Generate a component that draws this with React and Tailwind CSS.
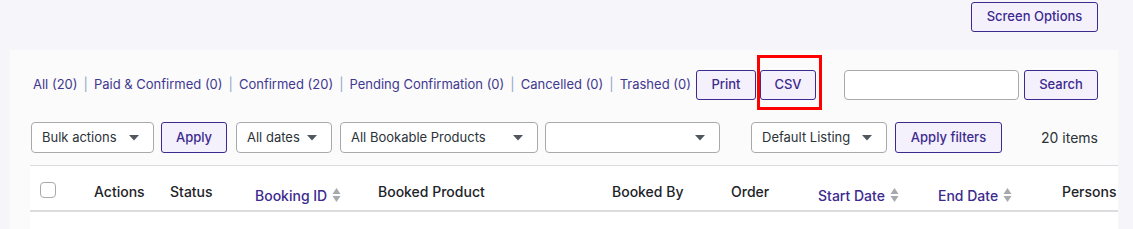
import React from "react";

const font = { fontFamily: "Inter, 'Noto Sans', sans-serif" };

function Caret() {
  return (
    <svg width="10" height="6" viewBox="0 0 10 6" className="shrink-0">
      <path d="M0 0 L10 0 L5 5.5 Z" fill="#50575e" />
    </svg>
  );
}

function Select({ label, w }) {
  return (
    <div
      className={`flex h-[31px] items-center justify-between whitespace-nowrap rounded-[4px] border border-[#a7aaad] bg-white pl-[10px] pr-[14px] text-[13px] text-[#2c3338] ${w}`}
    >
      <span>{label}</span>
      <Caret />
    </div>
  );
}

function Btn({ children, w, h = "h-[30px]" }) {
  return (
    <div
      className={`flex ${h} ${w} items-center justify-center whitespace-nowrap rounded-[3px] border border-[#3c2a8e] bg-[#f4f1fd] text-[13px] font-medium text-[#3c2a8e]`}
    >
      {children}
    </div>
  );
}

function Sort() {
  return (
    <svg width="9" height="16" viewBox="0 0 9 16" className="ml-[5px] shrink-0">
      <path d="M0.5 7 L4.5 1 L8.5 7 Z" fill="#a7aaad" />
      <path d="M0.5 9 L4.5 15 L8.5 9 Z" fill="#a7aaad" />
    </svg>
  );
}

function Sep() {
  return <span className="mx-[6px] text-[#8fa6c8]">|</span>;
}

export default function App() {
  const links = [
    "All (20)",
    "Paid & Confirmed (0)",
    "Confirmed (20)",
    "Pending Confirmation (0)",
    "Cancelled (0)",
    "Trashed (0)",
  ];
  return (
    <div style={font} className="h-[229px] w-[1133px] overflow-hidden bg-[#f6f5fa]">
      <div className="flex h-[50px] items-start justify-end pr-[35px] pt-[2px]">
        <Btn w="w-[127px]">Screen Options</Btn>
      </div>
      <div className="ml-[10px] w-[1108px] bg-[#fbfbfb] pt-[20px]">
        <div className="flex items-center pl-[23px] pr-[20px]">
          <div className="flex w-[659px] shrink-0 items-center whitespace-nowrap text-[13px] text-[#413891]">
            {links.map((l, i) => (
              <React.Fragment key={l}>
                {i > 0 && <Sep />}
                <span>{l}</span>
              </React.Fragment>
            ))}
          </div>
          <div className="ml-[4px]">
            <Btn w="w-[60px]">Print</Btn>
          </div>
          <div className="relative ml-[4px]">
            <Btn w="w-[56px]">CSV</Btn>
            <div className="pointer-events-none absolute -left-[3px] -right-[6px] -top-[15px] -bottom-[10px] border-[3px] border-[#ff0000]" />
          </div>
          <div className="ml-[28px] h-[30px] w-[175px] rounded-[4px] border border-[#a7aaad] bg-white" />
          <div className="ml-[5px]">
            <Btn w="w-[74px]">Search</Btn>
          </div>
        </div>
        <div className="mt-[22px] flex items-center pl-[21px] pr-[20px]">
          <Select label="Bulk actions" w="w-[123px]" />
          <div className="ml-[7px]">
            <Btn w="w-[66px]" h="h-[31px]">Apply</Btn>
          </div>
          <div className="ml-[9px]">
            <Select label="All dates" w="w-[96px]" />
          </div>
          <div className="ml-[8px]">
            <Select label="All Bookable Products" w="w-[198px]" />
          </div>
          <div className="ml-[7px]">
            <Select label="" w="w-[175px]" />
          </div>
          <div className="ml-[31px]">
            <Select label="Default Listing" w="w-[136px]" />
          </div>
          <div className="ml-[8px]">
            <Btn w="w-[107px]" h="h-[31px]">Apply filters</Btn>
          </div>
          <div className="ml-auto whitespace-nowrap text-[14px] text-[#2c3338]">20 items</div>
        </div>
        <div className="ml-[20px] mt-[12px] border-t border-[#dcdcde] bg-white">
          <div className="flex h-[46px] whitespace-nowrap border-b-2 border-[#dcdcde] text-[14px] font-medium text-[#1d2327]">
            <div className="w-[64px] pl-[10px] pt-[16px]">
              <div className="h-[16px] w-[16px] rounded-[4px] border border-[#a7aaad] bg-white" />
            </div>
            <div className="w-[76px] pt-[17px] leading-[18px]">Actions</div>
            <div className="w-[85px] pt-[17px] leading-[18px]">Status</div>
            <div className="flex w-[123px] items-start pt-[21px] leading-[18px] text-[#3c2a8e]">
              Booking ID<Sort />
            </div>
            <div className="w-[234px] pt-[17px] leading-[18px]">Booked Product</div>
            <div className="w-[119px] pt-[17px] leading-[18px]">Booked By</div>
            <div className="w-[87px] pt-[17px] leading-[18px]">Order</div>
            <div className="flex w-[120px] items-start pt-[21px] leading-[18px] text-[#3c2a8e]">
              Start Date<Sort />
            </div>
            <div className="flex w-[124px] items-start pt-[21px] leading-[18px] text-[#3c2a8e]">
              End Date<Sort />
            </div>
            <div className="pt-[17px] leading-[18px]">Persons</div>
          </div>
          <div className="h-[20px] bg-white" />
        </div>
      </div>
    </div>
  );
}
